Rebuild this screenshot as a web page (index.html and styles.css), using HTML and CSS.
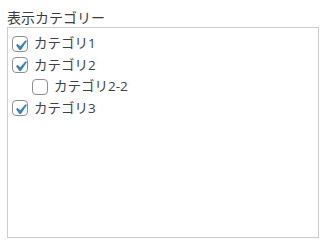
FILE: index.html
```html
<!DOCTYPE html>
<html lang="ja">
<head>
<meta charset="utf-8">
<link rel="stylesheet" href="styles.css">
</head>
<body>
<div class="field">
  <div class="label">表示カテゴリー</div>
  <div class="checklist">
    <ul class="tree">
      <li>
        <label class="item"><span class="cb"><svg class="check" viewBox="0 0 20 20"><path d="M14.83 4.89l1.34.94-5.81 8.38H9.02L5.78 9.67l1.34-1.25 2.57 2.4z"/></svg></span><span class="txt">カテゴリ1</span></label>
      </li>
      <li>
        <label class="item"><span class="cb"><svg class="check" viewBox="0 0 20 20"><path d="M14.83 4.89l1.34.94-5.81 8.38H9.02L5.78 9.67l1.34-1.25 2.57 2.4z"/></svg></span><span class="txt">カテゴリ2</span></label>
        <ul class="children">
          <li><label class="item"><span class="cb"></span><span class="txt">カテゴリ2-2</span></label></li>
        </ul>
      </li>
      <li>
        <label class="item"><span class="cb"><svg class="check" viewBox="0 0 20 20"><path d="M14.83 4.89l1.34.94-5.81 8.38H9.02L5.78 9.67l1.34-1.25 2.57 2.4z"/></svg></span><span class="txt">カテゴリ3</span></label>
      </li>
    </ul>
  </div>
</div>
</body>
</html>
```
FILE: styles.css
```css
html, body {
  margin: 0;
  padding: 0;
  background: #ffffff;
}
body {
  font-family: "Open Sans", "Noto Sans CJK JP", sans-serif;
  color: #3c434a;
}
.field {
  padding: 8px 0 0 7px;
}
.label {
  font-size: 14px;
  line-height: 19px;
  color: #3c3c3c;
}
.checklist {
  box-sizing: border-box;
  width: 312px;
  height: 211px;
  border: 1px solid #cccccc;
  padding: 5px 0 0 4px;
}
.tree, .children {
  list-style: none;
  margin: 0;
  padding: 0;
}
.children {
  padding-left: 20px;
}
.item {
  display: flex;
  align-items: center;
  height: 21.5px;
  font-size: 13.5px;
  color: #3c434a;
}
.cb {
  box-sizing: border-box;
  width: 16px;
  height: 16px;
  border: 1px solid #8c8f94;
  border-radius: 4px;
  background: #fff;
  margin-right: 6px;
  position: relative;
  flex: none;
}
.check {
  position: absolute;
  left: -3px;
  top: -2px;
  width: 21px;
  height: 21px;
  fill: #3582c4;
}
.txt {
  line-height: 1;
}
```
